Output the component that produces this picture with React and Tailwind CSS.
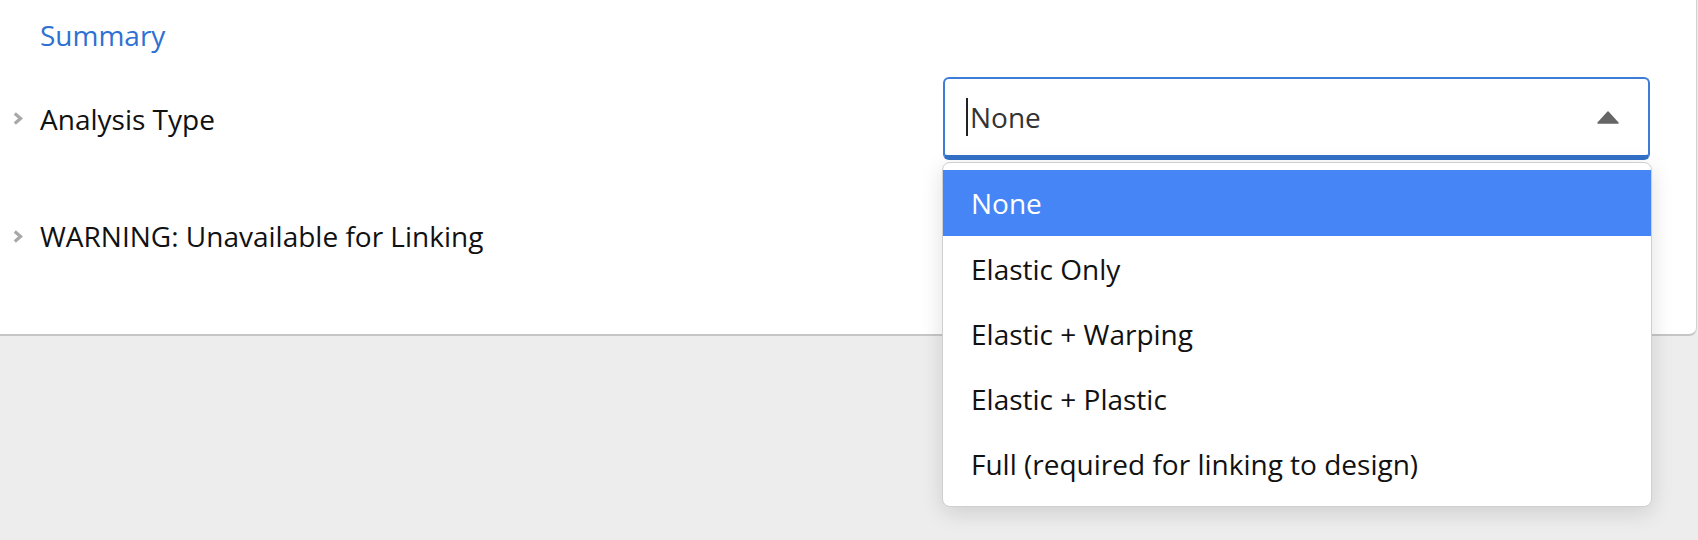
import React from "react";

const options = [
  "None",
  "Elastic Only",
  "Elastic + Warping",
  "Elastic + Plastic",
  "Full (required for linking to design)",
];

function Chevron() {
  return (
    <svg width="10" height="13" viewBox="0 0 10 13" className="shrink-0">
      <path d="M1.8 1.5 L7.6 6.5 L1.8 11.5" fill="none" stroke="#a8a8a8" strokeWidth="3.2" />
    </svg>
  );
}

export default function App() {
  return (
    <div
      className="min-h-screen w-full bg-[#ededed] text-[28px] text-[#111]"
      style={{ fontFamily: '"Open Sans", "Noto Sans", sans-serif' }}
    >
      {/* Card */}
      <div className="relative w-[1697px] h-[336px] bg-white border-r border-r-[#d2d2d2] border-b-2 border-b-[#c6c6c6] rounded-br-[8px]">
        <div className="pt-[16px] pl-[40px] leading-[38px] text-[#2f71d2]">Summary</div>

        {/* Analysis type row */}
        <div className="flex items-center mt-[23px] h-[83px]">
          <div className="flex items-center pl-[13px] gap-[17px]">
            <Chevron />
            <span className="leading-[38px]">Analysis Type</span>
          </div>

          <div className="relative ml-auto mr-[46px] w-[707px]">
            {/* Select */}
            <div className="flex items-center h-[83px] pl-[21px] pr-[29px] bg-white border-2 border-[#3c7dd8] border-b-[5px] border-b-[#3270c8] rounded-[6px]">
              <span className="w-[2px] h-[38px] bg-[#222]" />
              <span className="ml-[2px] leading-[38px] text-[#333]">None</span>
              <svg width="22" height="13" viewBox="0 0 22 13" className="ml-auto mt-[1px]">
                <path d="M11 1 L21 12 L1 12 Z" fill="#666" stroke="#666" strokeWidth="1.5" strokeLinejoin="round" />
              </svg>
            </div>

            {/* Menu */}
            <div className="absolute z-10 top-[85px] left-[-1px] w-[710px] bg-white border border-[#cfcfcf] rounded-[8px] pt-[7px] pb-[10px] shadow-[0_6px_22px_rgba(0,0,0,0.13)]">
              {options.map((o, i) => (
                <div
                  key={o}
                  className={
                    i === 0
                      ? "flex items-center h-[66px] pl-[28px] leading-[38px] bg-[#4685f5] text-white"
                      : "flex items-center h-[65px] pl-[28px] leading-[38px] text-[#111]"
                  }
                >
                  {o}
                </div>
              ))}
            </div>
          </div>
        </div>

        {/* Warning row */}
        <div className="flex items-center pl-[13px] gap-[17px] mt-[57px] h-[38px]">
          <Chevron />
          <span className="leading-[38px]">WARNING: Unavailable for Linking</span>
        </div>
      </div>
    </div>
  );
}
